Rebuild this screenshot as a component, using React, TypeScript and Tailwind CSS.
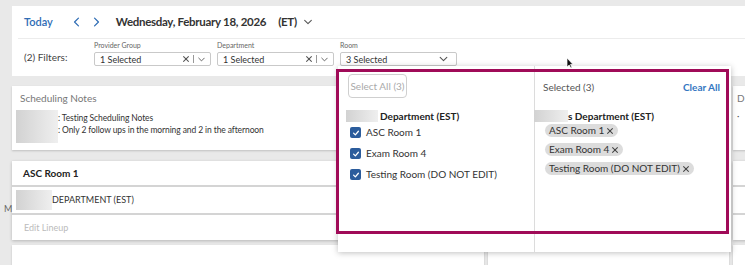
import React from 'react';

const ROOMS = ['ASC Room 1', 'Exam Room 4', 'Testing Room (DO NOT EDIT)'];

function Chevron({ dir, className }: { dir: 'left' | 'right' | 'down'; className?: string }) {
  const pts = dir === 'left' ? '7,1 2,6 7,11' : dir === 'right' ? '2,1 7,6 2,11' : '1,2 6,7 11,2';
  const box = dir === 'down' ? '0 0 12 9' : '0 0 9 12';
  return (
    <svg viewBox={box} className={className} fill="none" stroke="currentColor" strokeWidth="1.6" strokeLinecap="round" strokeLinejoin="round">
      <polyline points={pts} />
    </svg>
  );
}

function Cross({ className }: { className?: string }) {
  return (
    <svg viewBox="0 0 10 10" className={className} fill="none" stroke="currentColor" strokeWidth="1.3" strokeLinecap="round">
      <path d="M2 2 L8 8 M8 2 L2 8" />
    </svg>
  );
}

function FilterSelect({ label, value, width, clearable }: { label: string; value: string; width: string; clearable?: boolean }) {
  return (
    <div className={`flex flex-col ${width}`}>
      <span className="text-[7px] leading-[9px] text-[#666] mb-[2px]">{label}</span>
      <div className="h-[14px] border border-[#c9c9c9] rounded-[2px] flex items-center pl-[5px] pr-[5px] text-[9px] leading-none text-[#333]">
        <span className="flex-1">{value}</span>
        {clearable && <Cross className="w-[8px] h-[8px] text-[#555] mr-[3px]" />}
        {clearable && <span className="w-px h-[8px] bg-[#999] mr-[4px]" />}
        <Chevron dir="down" className={clearable ? 'w-[7px] h-[5px] text-[#555]' : 'w-[9px] h-[6px] text-[#555] mr-[3px]'} />
      </div>
    </div>
  );
}

function Blur({ className }: { className: string }) {
  return <div className={`bg-gradient-to-r from-[#d2d2d2] to-[#efefef] ${className}`} />;
}

function Column({ width, first }: { width: string; first?: boolean }) {
  return (
    <div className={`${width} flex flex-col shrink-0`}>
      <div className="h-[64px] bg-white shadow-[0_1px_2px_rgba(0,0,0,0.18)] pt-[6px] pl-[8px]">
        {first ? (
          <>
            <div className="text-[10px] leading-[13px] text-[#777]">Scheduling Notes</div>
            <div className="flex mt-[5px] -ml-[4px]">
              <Blur className="w-[42px] h-[33px]" />
              <div className="text-[8.5px] leading-[12px] text-[#333] pt-[2px] tracking-[-0.1px]">
                <div>: Testing Scheduling Notes</div>
                <div>: Only 2 follow ups in the morning and 2 in the afternoon</div>
              </div>
            </div>
          </>
        ) : (
          <>
            <div className="text-[10px] leading-[13px] text-[#777] -ml-[4px]">D</div>
            <div className="text-[9px] leading-[12px] text-[#555] mt-[5px] -ml-[4px]">·</div>
          </>
        )}
      </div>
      <div className="mt-[11px] bg-white shadow-[0_1px_3px_rgba(0,0,0,0.22)]">
        <div className="h-[26px] border-b-2 border-[#d4d4d4] flex items-center pl-[11px] text-[10px] font-bold text-[#222]">
          {first ? 'ASC Room 1' : ''}
        </div>
        <div className="h-[28px] border-b-2 border-[#d4d4d4] flex items-center pl-[4px] text-[9px] text-[#333]">
          {first && (
            <>
              <Blur className="w-[36px] h-[20px]" />
              <span>DEPARTMENT (EST)</span>
            </>
          )}
        </div>
        <div className="h-[25px] flex items-center pl-[12px] text-[9px] text-[#bbb]">{first ? 'Edit Lineup' : ''}</div>
      </div>
      <div className="mt-[5px] h-[30px] bg-white shadow-[0_1px_2px_rgba(0,0,0,0.18)]" />
    </div>
  );
}

function RoomDropdown() {
  return (
    <div className="absolute left-[338px] top-[66px] w-[393px] h-[186px] bg-white shadow-[0_1px_6px_rgba(0,0,0,0.25)] flex text-[#333]">
      <div className="w-[197px] border-r border-[#dcdcdc] pl-[10px] pt-[8px]">
        <div className="w-[59px] h-[24px] border border-[#cfcfcf] rounded-[4px] flex items-center justify-center text-[10px] text-[#aaa]">
          Select All (3)
        </div>
        <div className="flex items-center h-[12px] mt-[12px] -ml-[2px]">
          <Blur className="w-[32px] h-[12px]" />
          <span className="ml-[2px] text-[10px] font-bold text-[#222]">Department (EST)</span>
        </div>
        {ROOMS.map((r) => (
          <div key={r} className="h-[21px] flex items-center">
            <span className="w-[11px] h-[11px] ml-[2px] rounded-[2px] bg-[#2b5c9c] flex items-center justify-center">
              <svg viewBox="0 0 10 10" className="w-[8px] h-[8px]" fill="none" stroke="white" strokeWidth="1.6" strokeLinecap="round" strokeLinejoin="round">
                <polyline points="2,5.2 4.2,7.3 8,2.8" />
              </svg>
            </span>
            <span className="ml-[5px] text-[10px]">{r}</span>
          </div>
        ))}
      </div>
      <div className="flex-1 pt-[15px]">
        <div className="flex items-center justify-between pl-[8px] pr-[11px] h-[12px]">
          <span className="text-[10px] text-[#555]">Selected (3)</span>
          <span className="text-[10px] font-bold text-[#3577c2]">Clear All</span>
        </div>
        <div className="flex items-center h-[12px] mt-[17px] -ml-[1px]">
          <Blur className="w-[34px] h-[12px]" />
          <span className="text-[10px] font-bold text-[#222]">s Department (EST)</span>
        </div>
        <div className="flex flex-col items-start gap-[6px] pl-[10px] mt-[2px]">
          {ROOMS.map((r) => (
            <span key={r} className="h-[13px] px-[4px] rounded-full bg-[#dcdcdc] flex items-center text-[10px] text-[#333]">
              {r}
              <Cross className="ml-[2px] w-[8px] h-[8px] text-[#444]" />
            </span>
          ))}
        </div>
      </div>
    </div>
  );
}

export default function App() {
  return (
    <div className="w-[745px] h-[265px] overflow-hidden relative bg-[#e9e9e9] font-['Lato',sans-serif]">
      {/* Toolbar */}
      <div className="ml-[12px] mt-[6px] h-[70px] bg-white">
        <div className="h-[32px] flex items-center pl-[12px]">
          <span className="text-[11px] font-semibold text-[#2f6db5]">Today</span>
          <Chevron dir="left" className="w-[7px] h-[10px] ml-[20px] text-[#2f6db5]" />
          <Chevron dir="right" className="w-[7px] h-[10px] ml-[13px] text-[#2f6db5]" />
          <span className="ml-[16px] text-[11.5px] font-bold text-[#333] tracking-[-0.3px]">Wednesday, February 18, 2026</span>
          <span className="ml-[12px] text-[11.5px] font-bold text-[#333] tracking-[-0.3px]">(ET)</span>
          <Chevron dir="down" className="w-[8px] h-[6px] ml-[7px] text-[#555]" />
        </div>
        <div className="ml-[6px] border-t border-[#ececec]" />
        <div className="flex items-end pl-[12px] pt-[2px]">
          <span className="text-[10px] text-[#444] w-[70px] mb-[1px]">(2) Filters:</span>
          <div className="flex gap-[6px]">
            <FilterSelect label="Provider Group" value="1 Selected" width="w-[117px]" clearable />
            <FilterSelect label="Department" value="1 Selected" width="w-[117px]" clearable />
            <FilterSelect label="Room" value="3 Selected" width="w-[117px]" />
          </div>
        </div>
      </div>

      {/* Board */}
      <div className="flex mt-[10px]">
        <div className="w-[12px] shrink-0 relative">
          <span className="absolute left-[4px] top-[116px] text-[9px] text-[#666]">M</span>
        </div>
        <div className="flex gap-[4px]">
          <Column width="w-[472px]" first />
          <Column width="w-[241px]" />
          <Column width="w-[241px]" />
        </div>
      </div>

      <RoomDropdown />

      {/* highlight annotation */}
      <div className="absolute left-[336px] top-[69px] w-[393px] h-[165px] border-[3px] border-[#a00b58]" />

      {/* mouse cursor */}
      <svg viewBox="0 0 8 12" className="absolute left-[566px] top-[57px] w-[8px] h-[12px]">
        <path d="M1 1 L1 10 L3.2 8 L4.8 11 L6 10.4 L4.5 7.5 L7 7.5 Z" fill="#111" stroke="#fff" strokeWidth="0.7" />
      </svg>
    </div>
  );
}
